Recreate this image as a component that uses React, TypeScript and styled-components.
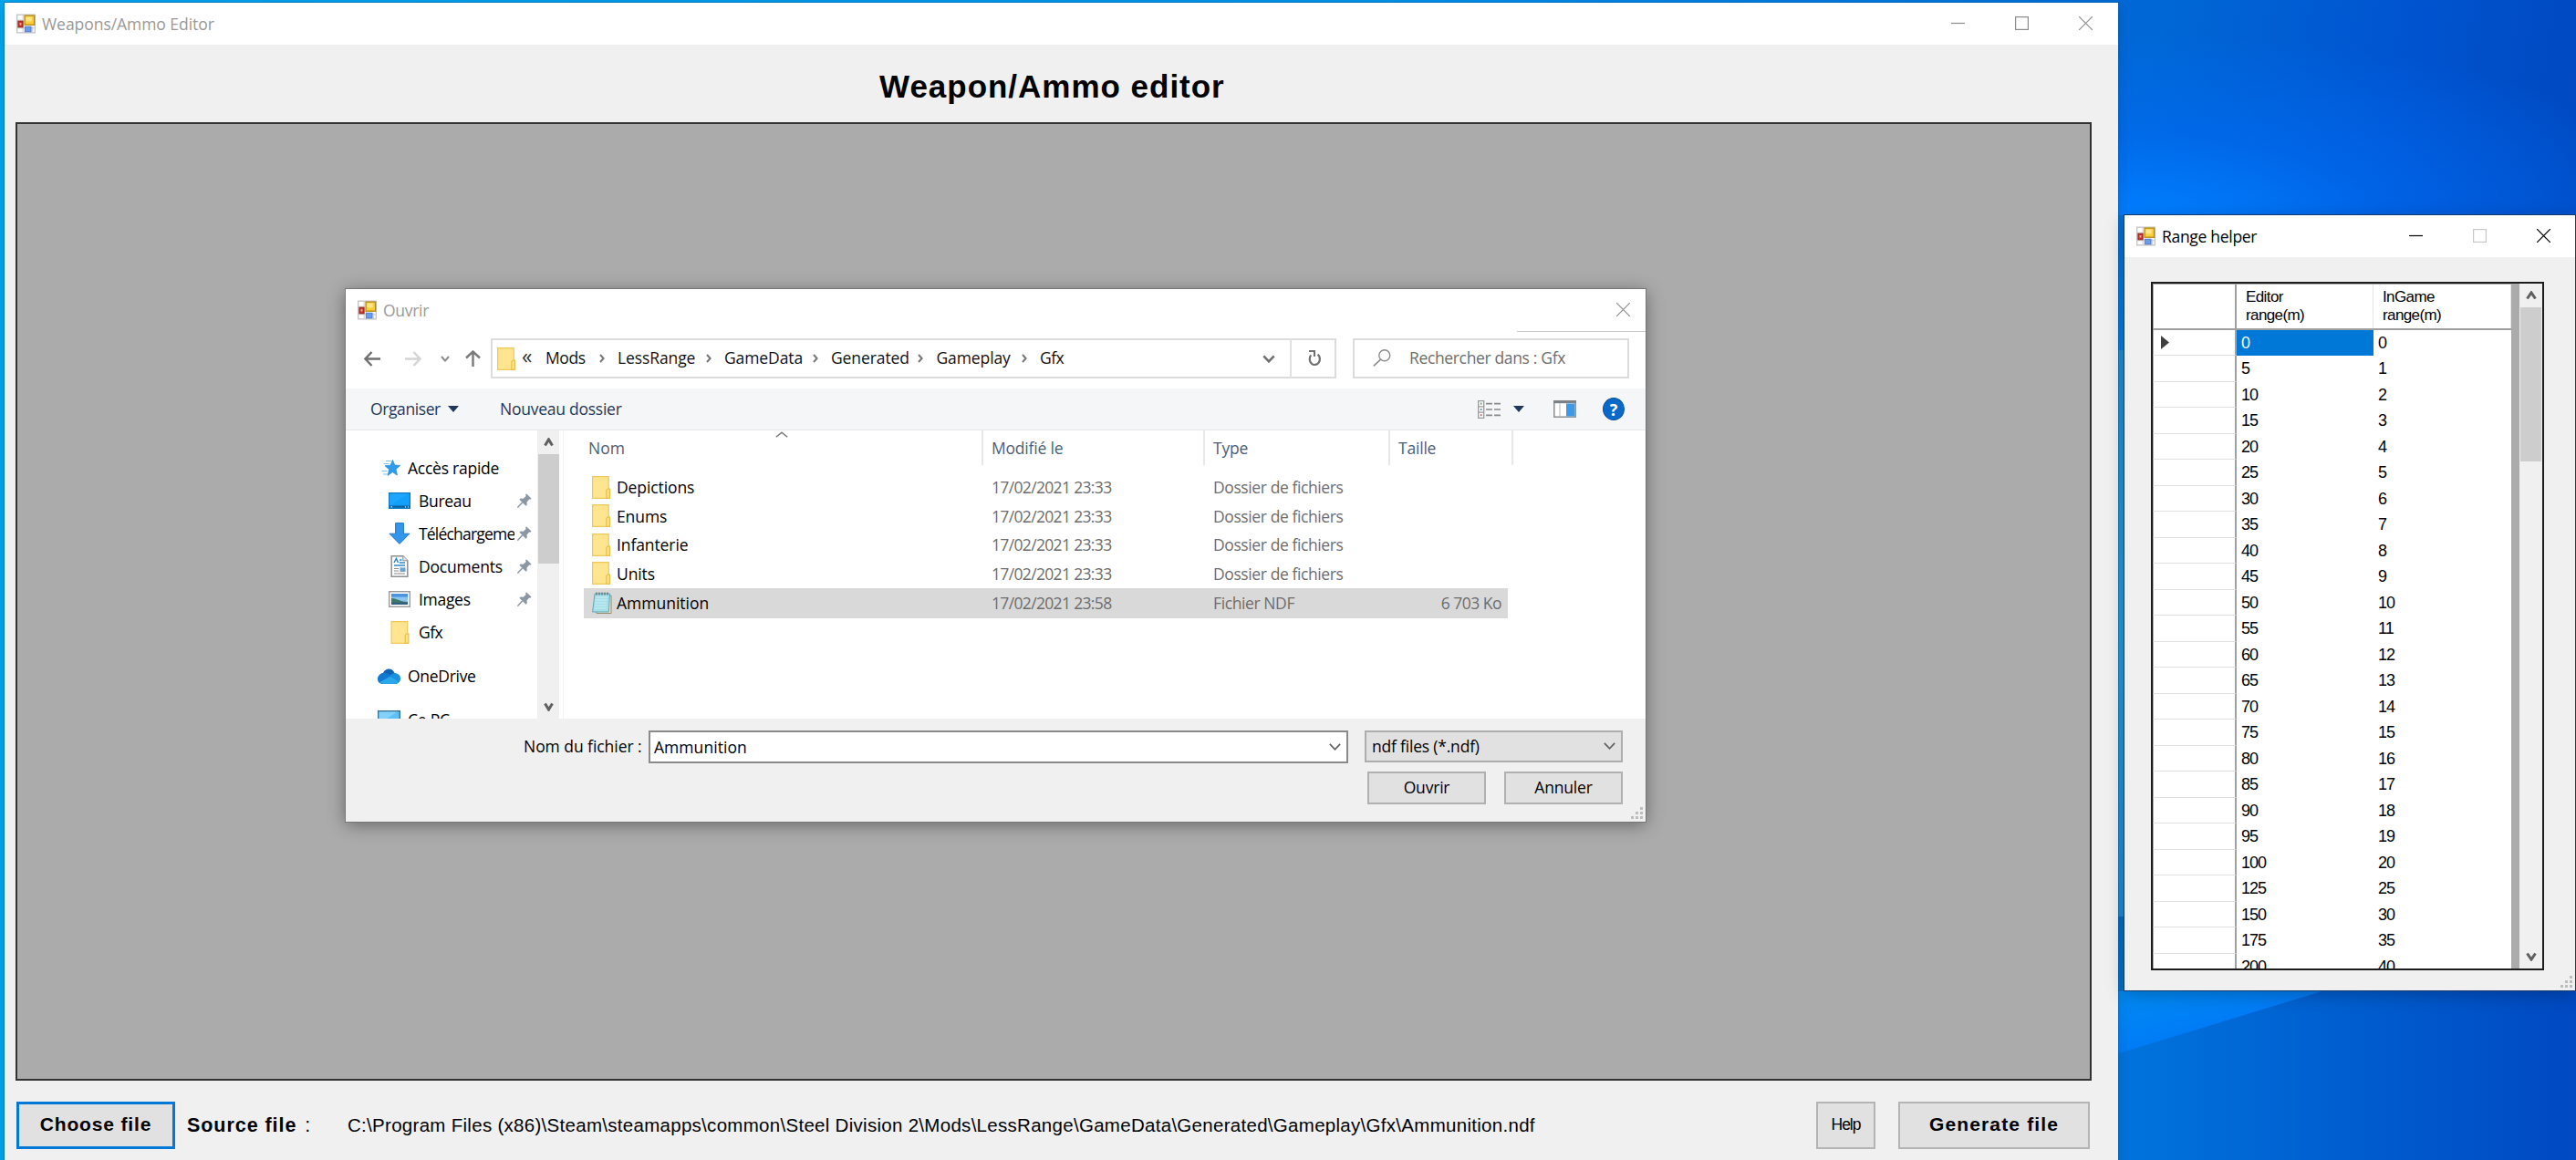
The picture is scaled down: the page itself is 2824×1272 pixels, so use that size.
import React from "react";
import styled, { createGlobalStyle, css } from "styled-components";

const SEGOE = `"Open Sans", "Noto Sans", sans-serif`;
const SANS = `"Liberation Sans", Arial, sans-serif`;

const GlobalStyle = createGlobalStyle`
  html, body { margin: 0; padding: 0; }
  body { width: 2824px; height: 1272px; overflow: hidden; }
  *, *::before, *::after { box-sizing: border-box; }
  svg { display: block; flex: none; }
`;

/* ---------- desktop ---------- */

const Desktop = styled.div`
  position: relative;
  width: 2824px;
  height: 1272px;
  overflow: hidden;
  background:
    linear-gradient(90deg, #00a6f0 0, #00a6f0 8px, transparent 8px) no-repeat,
    linear-gradient(90deg, #00a4ee 0, #0092ea 1500px, #006cd8 2322px) 0 0 / 2322px 4px no-repeat,
    linear-gradient(#0074e0, #0084ee) 2318px 236px / 12px 148px no-repeat,
    linear-gradient(#2094dc, #22a2e4 50%, #1f90de) 2318px 384px / 12px 621px no-repeat,
    linear-gradient(#0070cc, #0076d4) 2318px 1005px / 12px 82px no-repeat,
    linear-gradient(163deg, #008cf4 0, #007cf6 66px, transparent 67px) 2318px 1087px / 506px 185px no-repeat,
    radial-gradient(ellipse 620px 200px at 2335px 236px, rgba(0, 126, 255, 1), rgba(0, 108, 244, 0.6) 45%, rgba(0, 90, 225, 0)) 0 0 / 2824px 236px no-repeat,
    linear-gradient(100deg, #0068d6 2330px, #0054d0 2600px, #0048c0 2824px) 0 0 / 2824px 236px no-repeat,
    linear-gradient(90deg, #0074dc 2322px, #005fd0 2560px, #0049c2 2824px);
`;

const WindowFrame = styled.section<{ $x: number; $y: number; $w: number; $h: number; $edge: string; $shadow: string }>`
  position: absolute;
  left: ${(p) => p.$x}px;
  top: ${(p) => p.$y}px;
  width: ${(p) => p.$w}px;
  height: ${(p) => p.$h}px;
  display: flex;
  flex-direction: column;
  background: #f0f0f0;
  box-shadow: 0 0 0 1px ${(p) => p.$edge}, ${(p) => p.$shadow};
`;

const TitleBar = styled.header`
  display: flex;
  align-items: center;
  height: 46px;
  flex: none;
  padding: 0 0 0 13px;
  gap: 7px;
  background: #fff;
`;

const TitleText = styled.span<{ $inactive?: boolean; $ls?: number }>`
  flex: 1;
  font: 17.5px/24px ${SEGOE};
  letter-spacing: ${(p) => p.$ls ?? 0}px;
  color: ${(p) => (p.$inactive ? "#999" : "#000")};
  white-space: pre;
`;

const Caption = styled.div<{ $right: number }>`
  display: flex;
  gap: 55px;
  padding: 0 ${(p) => p.$right}px 1px 0;
`;

/* ---------- main window ---------- */

const Heading = styled.h1`
  margin: 0;
  height: 85px;
  padding: 23px 0 0 959px;
  font: bold 35px/46px ${SANS};
  letter-spacing: 0.98px;
  color: #000;
  white-space: pre;
`;

const Workspace = styled.div`
  height: 1051px;
  margin: 0 29px 0 12px;
  border: 2px solid #333;
  background: #ababab;
  flex: none;
`;

const BottomBar = styled.footer`
  display: flex;
  align-items: center;
  height: 52px;
  margin: 23px 31px 0 13px;
  flex: none;
`;

const FormButton = styled.button<{ $w: number; $bold?: boolean; $focus?: boolean; $ls?: number }>`
  width: ${(p) => p.$w}px;
  height: 52px;
  padding: 0 0 2px;
  border: ${(p) => (p.$focus ? "3px solid #0078d7" : "2px solid #b4b4b4")};
  background: #e1e1e1;
  color: #000;
  font: ${(p) => (p.$bold ? "bold 21px" : "17.5px")} / 24px ${SANS};
  letter-spacing: ${(p) => p.$ls ?? 0}px;
  white-space: pre;
`;

const SourceLabel = styled.span`
  width: 177px;
  padding-left: 13px;
  font: bold 21.5px/26px ${SANS};
  letter-spacing: 0.95px;
  white-space: pre;
`;

const SourceColon = styled.span`
  margin-left: 2px;
  font-weight: normal;
`;

const SourcePath = styled.span`
  flex: 1;
  padding-bottom: 1px;
  font: 20.5px/26px ${SANS};
  letter-spacing: 0.29px;
  color: #000;
  white-space: pre;
`;

const Spacer = styled.div<{ $w: number }>`
  width: ${(p) => p.$w}px;
  flex: none;
`;

/* ---------- file dialog ---------- */

const NavBar = styled.div`
  position: relative;
  display: flex;
  align-items: flex-start;
  height: 63px;
  padding: 8px 18px 0 20px;
  background: #fff;
  flex: none;
`;

const CaptionEdge = styled.i`
  position: absolute;
  right: 0;
  top: 0;
  width: 141px;
  height: 1px;
  background: #ccc;
`;

const NavIcons = styled.div`
  display: flex;
  align-items: center;
  height: 44px;
  width: 139px;
`;

const AddressBox = styled.div`
  display: flex;
  align-items: center;
  height: 44px;
  width: 927px;
  border: 2px solid #dcdcdc;
  padding-left: 5px;
  flex: none;
`;

const Crumb = styled.span<{ $w: number; $ls?: number }>`
  width: ${(p) => p.$w}px;
  flex: none;
  padding-bottom: 2px;
  font: 17.5px/24px ${SEGOE};
  letter-spacing: ${(p) => p.$ls ?? 0}px;
  color: #111;
  white-space: pre;
`;

const Overflow = styled.span`
  width: 26px;
  flex: none;
  padding-bottom: 6px;
  font: 23px/24px ${SEGOE};
  color: #333;
`;

const CrumbChevron = styled.span<{ $w: number }>`
  width: ${(p) => p.$w}px;
  flex: none;
  display: flex;
  align-items: center;
`;

const RefreshBox = styled.div`
  display: flex;
  align-items: center;
  justify-content: center;
  width: 49px;
  height: 42px;
  padding-left: 3px;
  border-left: 2px solid #e2e2e2;
`;

const DropArrow = styled.div`
  flex: 1;
  display: flex;
  justify-content: flex-end;
  padding-right: 16px;
`;

const SearchBox = styled.div`
  display: flex;
  align-items: center;
  gap: 20px;
  width: 303px;
  height: 44px;
  margin-left: 18px;
  padding: 0 0 2px 20px;
  border: 2px solid #dcdcdc;
  font: 17.5px/24px ${SEGOE};
  letter-spacing: -0.35px;
  color: #6d6d6d;
  white-space: pre;
  flex: none;
`;

const ToolBar = styled.div`
  display: flex;
  align-items: center;
  height: 46px;
  padding: 0 23px 0 27px;
  background: #f5f6f8;
  border-bottom: 1px solid #e8e8e8;
  flex: none;
`;

const ToolLabel = styled.span<{ $w: number; $ls?: number }>`
  width: ${(p) => p.$w}px;
  padding-bottom: 2px;
  font: 17.5px/24px ${SEGOE};
  letter-spacing: ${(p) => p.$ls ?? 0}px;
  color: #1e395b;
  white-space: pre;
`;

const ToolIcons = styled.div`
  flex: 1;
  display: flex;
  align-items: center;
  justify-content: flex-end;
`;

const DialogBody = styled.div`
  display: flex;
  height: 316px;
  background: #fff;
  overflow: hidden;
  flex: none;
`;

const Tree = styled.nav`
  width: 210px;
  height: 316px;
  padding-top: 23px;
  overflow: hidden;
`;

const TreeRow = styled.div<{ $child?: boolean; $gap?: number }>`
  display: flex;
  align-items: center;
  height: 36px;
  margin-top: ${(p) => p.$gap ?? 0}px;
  padding-left: ${(p) => (p.$child ? 47 : 35)}px;
`;

const TreeIcon = styled.span`
  width: 33px;
  flex: none;
  display: flex;
`;

const TreeLabel = styled.span<{ $child?: boolean; $ls?: number }>`
  width: ${(p) => (p.$child ? 105 : 140)}px;
  overflow: hidden;
  font: 17.5px/26px ${SEGOE};
  letter-spacing: ${(p) => p.$ls ?? 0}px;
  color: #000;
  white-space: pre;
`;

const PinSlot = styled.span`
  padding-left: 3px;
`;

const ScrollTrack = styled.div<{ $w: number }>`
  display: flex;
  flex-direction: column;
  align-items: center;
  width: ${(p) => p.$w}px;
  flex: none;
  background: #f0f0f0;
`;

const ScrollArrow = styled.div`
  display: flex;
  align-items: center;
  justify-content: center;
  height: 26px;
  flex: none;
`;

const ScrollThumb = styled.div<{ $h: number }>`
  width: 23px;
  height: ${(p) => p.$h}px;
  background: #cdcdcd;
`;

const Grow = styled.div`
  flex: 1;
`;

const FileList = styled.div`
  flex: 1;
  margin-left: 4px;
  border-left: 1px solid #f2f2f2;
`;

const ListHeader = styled.div`
  position: relative;
  display: grid;
  grid-template-columns: 460px 243px 203px 135px;
  height: 38px;
`;

const SortMark = styled.span`
  position: absolute;
  left: 232px;
  top: 1px;
`;

const HeadCell = styled.div<{ $pl: number; $ls?: number }>`
  padding: 7px 0 0 ${(p) => p.$pl}px;
  border-right: 2px solid #e8e8e8;
  font: 17.5px/24px ${SEGOE};
  letter-spacing: ${(p) => p.$ls ?? 0}px;
  color: #4c607a;
  white-space: pre;
`;

const FileRows = styled.div`
  padding: 8.5px 0 0 22px;
`;

const FileRow = styled.div<{ $selected?: boolean }>`
  display: grid;
  grid-template-columns: 438px 243px 203px 129px;
  align-items: center;
  width: 1013px;
  height: ${(p) => (p.$selected ? 33 : 31.5)}px;
  ${(p) =>
    p.$selected &&
    css`
      background: #d9d9d9;
    `}
`;

const NameCell = styled.div<{ $ls?: number }>`
  display: flex;
  align-items: center;
  padding-left: 9px;
  font: 17.5px/24px ${SEGOE};
  letter-spacing: ${(p) => p.$ls ?? 0}px;
  color: #000;
`;

const FileIcon = styled.span`
  width: 27px;
  flex: none;
`;

const MetaCell = styled.div<{ $right?: boolean; $ls?: number }>`
  padding: ${(p) => (p.$right ? "0 7px 0 0" : "0 0 0 9px")};
  text-align: ${(p) => (p.$right ? "right" : "left")};
  font: 17.5px/24px ${SEGOE};
  letter-spacing: ${(p) => p.$ls ?? 0}px;
  color: #6d6d6d;
  white-space: pre;
`;

const DialogFooter = styled.div`
  flex: 1;
  padding: 13px 25px 0 195px;
  display: flex;
  flex-direction: column;
  gap: 9px;
`;

const FooterLine = styled.div`
  display: flex;
  align-items: flex-start;
`;

const FieldLabel = styled.span`
  width: 137px;
  flex: none;
  padding-top: 5px;
  font: 17.5px/24px ${SEGOE};
  letter-spacing: -0.05px;
  white-space: pre;
`;

const Combo = styled.div<{ $w: number; $grey?: boolean }>`
  display: flex;
  align-items: center;
  justify-content: space-between;
  flex: none;
  width: ${(p) => p.$w}px;
  height: ${(p) => (p.$grey ? 35 : 36)}px;
  padding: 0 6px 1px ${(p) => (p.$grey ? 6 : 4)}px;
  border: 2px solid ${(p) => (p.$grey ? "#adadad" : "#8a8a8a")};
  background: ${(p) => (p.$grey ? "#e1e1e1" : "#fff")};
  font: 17.5px/24px ${SEGOE};
  letter-spacing: ${(p) => (p.$grey ? -0.2 : 0.05)}px;
  white-space: pre;
`;

const DialogButtons = styled.div`
  display: flex;
  justify-content: flex-end;
  gap: 20px;
`;

const DialogButton = styled.button`
  width: 130px;
  height: 36px;
  padding: 0 0 2px;
  border: 2px solid #b0b0b0;
  background: #e1e1e1;
  color: #000;
  font: 17.5px/24px ${SEGOE};
  letter-spacing: -0.2px;
`;

const GripSlot = styled.span`
  position: absolute;
  right: 2px;
  bottom: 2px;
`;

/* ---------- range helper ---------- */

const RangeBody = styled.div`
  flex: 1;
  padding: 27px 34px 22px 29px;
`;

const GridFrame = styled.div`
  display: flex;
  height: 755px;
  border: 2px solid #1c1c1c;
  background: #ababab;
  overflow: hidden;
`;

const GridTable = styled.div`
  width: 393px;
  background: #fff;
  flex: none;
`;

const GridRow = styled.div`
  display: grid;
  grid-template-columns: 92px 150px 151px;
  height: 28.5px;
`;

const GridHead = styled(GridRow)`
  height: 50.5px;
  border-top: 1px solid #ababab;
  border-bottom: 2px solid #a0a0a0;
`;

const GridHeadCell = styled.div`
  padding: 4px 0 0 10px;
  font: 17px/20px ${SANS};
  letter-spacing: -0.6px;
  color: #000;
  white-space: pre-line;
  border-right: 1px solid #e5e5e5;
`;

const RowHeader = styled.div<{ $line?: boolean }>`
  display: flex;
  align-items: center;
  padding-left: 8px;
  border-left: 1px solid #ababab;
  border-right: 2px solid #a0a0a0;
  border-bottom: ${(p) => (p.$line ? "1px solid #e0e0e0" : "0")};
`;

const GridCell = styled.div<{ $selected?: boolean }>`
  padding: 2px 0 0 5px;
  font: 18px/24px ${SANS};
  letter-spacing: -1px;
  background: ${(p) => (p.$selected ? "#0078d7" : "#fff")};
  color: ${(p) => (p.$selected ? "#fff" : "#000")};
`;

const GridGutter = styled.div`
  width: 9px;
  flex: none;
`;

/* ---------- drawings ---------- */

const AppIcon = () => (
  <svg width="21" height="22" viewBox="0 0 22 22">
    <rect x="0.7" y="0.7" width="20.6" height="20.6" fill="#fff" stroke="#c4c4c4" strokeWidth="1.4" />
    <path d="M7.5 1v20M1 7h7M1 16h20M14 14v7M18.5 14v7" stroke="#c8c8c8" fill="none" />
    <rect x="9.5" y="1.7" width="11" height="10.6" fill="#fbcf3c" stroke="#b98a10" strokeWidth="1.4" />
    <rect x="11" y="3.2" width="6.5" height="5" fill="#fde58a" />
    <rect x="2" y="8" width="5.4" height="7" fill="#c8352b" stroke="#8e1d18" />
    <rect x="3.7" y="10" width="2" height="2.6" fill="#f2a59b" />
    <rect x="9.8" y="14.4" width="7" height="5.8" fill="#6b9bef" stroke="#4a78d0" />
  </svg>
);

const MinGlyph = ({ color }: { color: string }) => (
  <svg width="15" height="15" viewBox="0 0 15 15"><path d="M0 7.5h15" stroke={color} strokeWidth="1.2" /></svg>
);
const MaxGlyph = ({ color }: { color: string }) => (
  <svg width="15" height="15" viewBox="0 0 15 15"><rect x="0.6" y="0.6" width="13.8" height="13.8" fill="none" stroke={color} strokeWidth="1.2" /></svg>
);
const CloseGlyph = ({ color }: { color: string }) => (
  <svg width="15" height="15" viewBox="0 0 15 15"><path d="M0 0l15 15M15 0L0 15" stroke={color} strokeWidth="1.2" /></svg>
);

const Folder = ({ w = 20, h = 25 }: { w?: number; h?: number }) => (
  <svg width={w} height={h} viewBox="0 0 20 25">
    <path d="M0.6 0.6h17.6v23.8H0.6z" fill="#ffe58f" stroke="#efc955" strokeWidth="1.2" />
    <path d="M15.8 24.4v-9l1.6-1.4h2v10.4z" fill="#ffe08a" stroke="#e6bd45" strokeWidth="1.1" />
  </svg>
);

const NotepadIcon = () => (
  <svg width="22" height="25" viewBox="0 0 22 25">
    <path d="M5 4h16v19.500H5z" fill="#f0ead2" stroke="#968b68" />
    <path d="M3 2h16.500l-1 20H0.600z" fill="#a4dee8" stroke="#5fa9b8" />
    <path d="M4 6h13M3.500 9h13M3 12h13M3 15h13M2.500 18h13" stroke="#cdf0f5" />
    <path d="M5 0.500v3M8 0.500v3M11 0.500v3M14 0.500v3M17 0.500v3" stroke="#555" />
  </svg>
);

const Chevron = ({ dir, w, h, sw = 2, color = "#606060" }: { dir: "up" | "down" | "right"; w: number; h: number; sw?: number; color?: string }) => {
  const m = sw / 2;
  const d =
    dir === "up"
      ? `M${m} ${h - m}L${w / 2} ${m + 0.4}L${w - m} ${h - m}`
      : dir === "down"
      ? `M${m} ${m}L${w / 2} ${h - m - 0.4}L${w - m} ${m}`
      : `M${m} ${m}L${w - m - 0.4} ${h / 2}L${m} ${h - m}`;
  return (
    <svg width={w} height={h} viewBox={`0 0 ${w} ${h}`}><path d={d} fill="none" stroke={color} strokeWidth={sw} /></svg>
  );
};

const NavArrow = ({ color, flip }: { color: string; flip?: boolean }) => (
  <svg width="18" height="17" viewBox="0 0 18 17">
    <path transform={flip ? "translate(18 0) scale(-1 1)" : undefined} d="M8.5 1L1.5 8.5l7 7.5M1.5 8.5H18" fill="none" stroke={color} strokeWidth="2.4" />
  </svg>
);
const UpArrow = () => (
  <svg width="17" height="18" viewBox="0 0 17 18"><path d="M1 8.5L8.5 1.5 16 8.5M8.5 1.5V18" fill="none" stroke="#7a7a7a" strokeWidth="2.4" /></svg>
);
const Triangle = () => (
  <svg width="12" height="7" viewBox="0 0 12 7"><path d="M0 0h12L6 7z" fill="#1e395b" /></svg>
);
const RefreshIcon = () => (
  <svg width="15" height="20" viewBox="0 0 15 20">
    <path d="M10.600 5.600A5.600 6.300 0 1 1 3.200 6.400" fill="none" stroke="#707070" strokeWidth="2.2" />
    <path d="M1 2h6v6" fill="none" stroke="#707070" strokeWidth="2.1" />
  </svg>
);
const SearchIcon = () => (
  <svg width="20" height="19" viewBox="0 0 20 19">
    <circle cx="12.8" cy="6.8" r="6" fill="none" stroke="#8b8b8b" strokeWidth="1.4" />
    <path d="M8.6 11.2L0.8 18.4" stroke="#8b8b8b" strokeWidth="1.6" />
  </svg>
);
const ViewIcon = () => (
  <svg width="25" height="20" viewBox="0 0 25 20">
    <path d="M0.7 0.7h6v18.6h-6zM0.7 6.9h6M0.7 13.1h6" fill="#fff" stroke="#999" strokeWidth="1.3" />
    <path d="M3.7 2.6v2" stroke="#5a9e58" strokeWidth="1.6" /><path d="M3.7 9v2" stroke="#4a90d9" strokeWidth="1.6" /><path d="M3.7 15.2v2" stroke="#d05050" strokeWidth="1.6" />
    <path d="M9 3.6h7M18 3.6h7M9 10h7M18 10h7M9 16.4h7M18 16.4h7" stroke="#8a8a8a" strokeWidth="1.6" />
  </svg>
);
const PaneIcon = () => (
  <svg width="25" height="19" viewBox="0 0 25 19">
    <rect x="0.8" y="0.8" width="23.4" height="17.4" fill="#fff" stroke="#8a8f94" strokeWidth="1.5" />
    <path d="M0 1.7h25" stroke="#7c8186" strokeWidth="3" /><path d="M7 3v15" stroke="#b5b5b5" />
    <rect x="14" y="3.5" width="9.5" height="14" fill="#3f9ae5" />
  </svg>
);
const HelpMark = styled.span`
  display: flex;
  align-items: center;
  justify-content: center;
  width: 24px;
  height: 25px;
  border-radius: 50%;
  border: 1px solid #0a4f9c;
  background: #0869c9;
  color: #fff;
  font: bold 18px/22px ${SEGOE};
`;

const StarIcon = () => (
  <svg width="21" height="18" viewBox="0 0 21 18">
    <path d="M12.5 0.5l2.2 5.6 6 .3-4.7 4 1.4 6.7-5.1-3.5-5.2 3.8 1.5-6.6L4 6.7l6-.4z" fill="#2f9bec" stroke="#1c86d8" strokeWidth="0.7" />
    <path d="M5 1.5h6M2.5 4.5h6M0.5 12.5h6M2 16h5" stroke="#7cc3f2" strokeWidth="1.2" />
  </svg>
);
const DesktopIcon = () => (
  <svg width="24" height="18" viewBox="0 0 24 18">
    <rect x="0.6" y="0.6" width="22.8" height="16.8" fill="#12a0fb" stroke="#0b79c4" strokeWidth="1.2" />
    <path d="M1 15.6h22" stroke="#0a5fa0" strokeWidth="2.2" /><path d="M2.5 15.8h1.5M18 15.8h1M21 15.8h1" stroke="#cfeaff" strokeWidth="1.2" />
    <path d="M1.2 14.4V1.2h20z" fill="#3ab2ff" opacity="0.35" />
  </svg>
);
const DownloadIcon = () => (
  <svg width="24" height="24" viewBox="0 0 24 24"><path d="M7.6 0.6h8.8v11.6h6.6L12 23.4.9 12.2h6.7z" fill="#3396ea" stroke="#2377c4" strokeWidth="1" /></svg>
);
const DocIcon = () => (
  <svg width="24" height="24" viewBox="0 0 24 24">
    <path d="M3.2.8h12.6l5 5v17.4H3.2z" fill="#fff" stroke="#8f8f8f" strokeWidth="1.5" /><path d="M15.8 .8v5h5" fill="#e8e8e8" stroke="#8f8f8f" />
    <path d="M6 8l2.4-4.5L10.5 8M12 5h2.5M12 8h6M6 11h12" fill="none" stroke="#2a8bd4" strokeWidth="1.5" />
    <path d="M6 14.5h5M6 17h5M6 20h12" stroke="#888" strokeWidth="1.2" /><rect x="12.5" y="13.4" width="6" height="4.6" fill="#6aa5cf" />
  </svg>
);
const ImageIcon = () => (
  <svg width="24" height="18" viewBox="0 0 24 18">
    <rect x="0.7" y="0.7" width="22.6" height="16.6" fill="#fff" stroke="#9a9a9a" strokeWidth="1.4" />
    <rect x="3" y="3" width="18" height="12" fill="#8fc3f2" /><path d="M3 3h18v3.6H3z" fill="#4b93df" />
    <path d="M3 8c5-.5 8 3.5 18 4v3H3z" fill="#3c7a68" /><path d="M3 12.5h18V15H3z" fill="#355f80" />
  </svg>
);
const CloudIcon = () => (
  <svg width="25" height="17" viewBox="0 0 25 17">
    <path d="M5 12C1 11 1 5.5 6 5 8-.5 16-1.500 18.500 5L12 12z" fill="#0f62b4" />
    <path d="M18 5c4 0 7 2.400 7 6 0 3.500-2.500 6-6 6H6l-4-2L14 7z" fill="#1a8fe0" />
    <path d="M6 5c2.500-.6 5 .5 7 2l9 8.500c-1 1-2 1.500-3.500 1.500H5.500C2 17 0 14.500 0 11.500S2.500 5.500 6 5z" fill="#1278d0" />
    <path d="M2 15.300L14 8.500l9 6.300c-1 1.500-2.600 2.200-4.200 2.200H5.800C4.200 17 3 16.500 2 15.300z" fill="#28a8ea" />
  </svg>
);
const PcIcon = () => (
  <svg width="25" height="20" viewBox="0 0 25 20">
    <rect x="0.7" y="0.7" width="23.6" height="15" fill="#5cc0f8" stroke="#3b7291" strokeWidth="1.4" /><path d="M1.400 15V1.400h20z" fill="#9bdcff" opacity="0.6" />
    <path d="M7 19h11" stroke="#6b7d88" strokeWidth="1.600" />
  </svg>
);
const PinIcon = () => (
  <svg width="16" height="16" viewBox="0 0 16 16">
    <path d="M10 .3l5.700 5.400-1.600 1-.9-.3-2.700 3 .3 3-1.300 1.300L2.400 6.700l1.400-1.300 2.900.3L9.600 3 9.200 1.600z" fill="#8b98a3" />
    <path d="M5.600 10L.4 15.600" stroke="#8b98a3" strokeWidth="1.500" />
  </svg>
);
const Grip = () => (
  <svg width="14" height="14" viewBox="0 0 14 14">
    <g fill="#bdbdbd">
      <rect x="10" y="0" width="3" height="3" /><rect x="5" y="5" width="3" height="3" /><rect x="10" y="5" width="3" height="3" />
      <rect x="0" y="10" width="3" height="3" /><rect x="5" y="10" width="3" height="3" /><rect x="10" y="10" width="3" height="3" />
    </g>
  </svg>
);

/* ---------- data ---------- */

const crumbs: [string, number, number, number][] = [
  ["Mods", 59, 20, -0.4],
  ["LessRange", 96.5, 20.5, -0.1],
  ["GameData", 96.5, 20.5, -0.1],
  ["Generated", 95, 20.5, -0.1],
  ["Gameplay", 93, 20.5, -0.1],
];

const treeChildren: [string, React.ReactNode, boolean, number][] = [
  ["Bureau", <DesktopIcon />, true, -0.3],
  ["Téléchargements", <DownloadIcon />, true, -0.8],
  ["Documents", <DocIcon />, true, -0.2],
  ["Images", <ImageIcon />, true, -0.3],
  ["Gfx", <Folder w={25} h={25} />, false, -0.5],
];

const files = [
  { name: "Depictions", date: "17/02/2021 23:33", type: "Dossier de fichiers", size: "" },
  { name: "Enums", date: "17/02/2021 23:33", type: "Dossier de fichiers", size: "" },
  { name: "Infanterie", date: "17/02/2021 23:33", type: "Dossier de fichiers", size: "" },
  { name: "Units", date: "17/02/2021 23:33", type: "Dossier de fichiers", size: "" },
  { name: "Ammunition", date: "17/02/2021 23:58", type: "Fichier NDF", size: "6 703 Ko", selected: true },
];

const ranges: number[] = [
  ...Array.from({ length: 21 }, (_, i) => i * 5),
  125, 150, 175, 200,
];

/* ---------- windows ---------- */

const MainWindow = () => (
  <WindowFrame $x={5} $y={3} $w={2317} $h={1290} $edge="rgba(20,90,150,0.45)" $shadow="0 3px 16px rgba(0,0,0,0.13)">
    <TitleBar>
      <AppIcon />
      <TitleText $inactive $ls={-0.05}>Weapons/Ammo Editor</TitleText>
      <Caption $right={28}>
        <MinGlyph color="#8c8c8c" />
        <MaxGlyph color="#8c8c8c" />
        <CloseGlyph color="#8c8c8c" />
      </Caption>
    </TitleBar>
    <Heading>Weapon/Ammo editor</Heading>
    <Workspace />
    <BottomBar>
      <FormButton $w={174} $bold $focus $ls={0.85}>Choose file</FormButton>
      <SourceLabel>Source file <SourceColon>:</SourceColon></SourceLabel>
      <Spacer $w={12} />
      <SourcePath>{"C:\\Program Files (x86)\\Steam\\steamapps\\common\\Steel Division 2\\Mods\\LessRange\\GameData\\Generated\\Gameplay\\Gfx\\Ammunition.ndf"}</SourcePath>
      <FormButton $w={65} $ls={-1}>Help</FormButton>
      <Spacer $w={25} />
      <FormButton $w={210} $bold $ls={1.15}>Generate file</FormButton>
    </BottomBar>
  </WindowFrame>
);

const OpenDialog = () => (
  <WindowFrame $x={379} $y={317} $w={1425} $h={584} $edge="#777" $shadow="0 3px 18px rgba(0,0,0,0.42)">
    <TitleBar>
      <AppIcon />
      <TitleText $inactive $ls={-0.3}>Ouvrir</TitleText>
      <Caption $right={17}><CloseGlyph color="#8c8c8c" /></Caption>
    </TitleBar>
    <NavBar>
      <CaptionEdge />
      <NavIcons>
        <NavArrow color="#707070" />
        <Spacer $w={27} />
        <NavArrow color="#d5d5d5" flip />
        <Spacer $w={21} />
        <Chevron dir="down" w={10} h={7} color="#8a8a8a" />
        <Spacer $w={17} />
        <UpArrow />
      </NavIcons>
      <AddressBox>
        <Folder />
        <Spacer $w={7} />
        <Overflow>«</Overflow>
        {crumbs.map(([label, w, gap, ls]) => (
          <React.Fragment key={label}>
            <Crumb $w={w} $ls={ls}>{label}</Crumb>
            <CrumbChevron $w={gap}><Chevron dir="right" w={6} h={10} color="#777" /></CrumbChevron>
          </React.Fragment>
        ))}
        <Crumb $w={40} $ls={-0.5}>Gfx</Crumb>
        <DropArrow><Chevron dir="down" w={14} h={9} sw={2.6} color="#707070" /></DropArrow>
        <RefreshBox><RefreshIcon /></RefreshBox>
      </AddressBox>
      <SearchBox><SearchIcon />Rechercher dans : Gfx</SearchBox>
    </NavBar>
    <ToolBar>
      <ToolLabel $w={85} $ls={-0.4}>Organiser</ToolLabel>
      <Triangle />
      <Spacer $w={45} />
      <ToolLabel $w={160} $ls={-0.25}>Nouveau dossier</ToolLabel>
      <ToolIcons>
        <ViewIcon />
        <Spacer $w={14} />
        <Triangle />
        <Spacer $w={32} />
        <PaneIcon />
        <Spacer $w={29} />
        <HelpMark>?</HelpMark>
      </ToolIcons>
    </ToolBar>
    <DialogBody>
      <Tree>
        <TreeRow>
          <Spacer $w={4} />
          <StarIcon />
          <Spacer $w={8} />
          <TreeLabel $ls={-0.25}>Accès rapide</TreeLabel>
        </TreeRow>
        {treeChildren.map(([label, icon, pinned, ls]) => (
          <TreeRow key={label} $child>
            <TreeIcon>{icon}</TreeIcon>
            <TreeLabel $child $ls={ls}>{label}</TreeLabel>
            {pinned && <PinSlot><PinIcon /></PinSlot>}
          </TreeRow>
        ))}
        <TreeRow $gap={12}>
          <TreeIcon><CloudIcon /></TreeIcon>
          <TreeLabel $ls={-0.3}>OneDrive</TreeLabel>
        </TreeRow>
        <TreeRow $gap={12}>
          <TreeIcon><PcIcon /></TreeIcon>
          <TreeLabel $ls={-0.2}>Ce PC</TreeLabel>
        </TreeRow>
      </Tree>
      <ScrollTrack $w={24}>
        <ScrollArrow><Chevron dir="up" w={11} h={10} sw={3} /></ScrollArrow>
        <ScrollThumb $h={120} />
        <Grow />
        <ScrollArrow><Chevron dir="down" w={11} h={10} sw={3} /></ScrollArrow>
      </ScrollTrack>
      <FileList>
        <ListHeader>
          <SortMark><Chevron dir="up" w={14} h={7} sw={1.5} color="#777" /></SortMark>
          <HeadCell $pl={27}>Nom</HeadCell>
          <HeadCell $pl={9} $ls={-0.2}>Modifié le</HeadCell>
          <HeadCell $pl={9} $ls={-0.2}>Type</HeadCell>
          <HeadCell $pl={9} $ls={-0.2}>Taille</HeadCell>
        </ListHeader>
        <FileRows>
          {files.map((f) => (
            <FileRow key={f.name} $selected={f.selected}>
              <NameCell $ls={f.selected ? 0 : -0.1}><FileIcon>{f.selected ? <NotepadIcon /> : <Folder />}</FileIcon>{f.name}</NameCell>
              <MetaCell $ls={-0.66}>{f.date}</MetaCell>
              <MetaCell $ls={-0.4}>{f.type}</MetaCell>
              <MetaCell $right $ls={-0.5}>{f.size}</MetaCell>
            </FileRow>
          ))}
        </FileRows>
      </FileList>
    </DialogBody>
    <DialogFooter>
      <FooterLine>
        <FieldLabel>Nom du fichier :</FieldLabel>
        <Combo $w={767}>Ammunition<Chevron dir="down" w={13} h={8} sw={1.7} /></Combo>
        <Spacer $w={18} />
        <Combo $w={283} $grey>ndf files (*.ndf)<Chevron dir="down" w={13} h={8} sw={1.7} /></Combo>
      </FooterLine>
      <DialogButtons>
        <DialogButton>Ouvrir</DialogButton>
        <DialogButton>Annuler</DialogButton>
      </DialogButtons>
    </DialogFooter>
    <GripSlot><Grip /></GripSlot>
  </WindowFrame>
);

const RangeHelper = () => (
  <WindowFrame $x={2329} $y={236} $w={494} $h={850} $edge="#123a6e" $shadow="0 5px 18px rgba(0,0,0,0.25)">
    <TitleBar>
      <AppIcon />
      <TitleText $ls={-0.3}>Range helper</TitleText>
      <Caption $right={27}>
        <MinGlyph color="#000" />
        <MaxGlyph color="#c8c8c8" />
        <CloseGlyph color="#000" />
      </Caption>
    </TitleBar>
    <RangeBody>
      <GridFrame>
        <GridTable>
          <GridHead>
            <RowHeader />
            <GridHeadCell>{"Editor\nrange(m)"}</GridHeadCell>
            <GridHeadCell>{"InGame\nrange(m)"}</GridHeadCell>
          </GridHead>
          {ranges.map((r, i) => (
            <GridRow key={r}>
              <RowHeader $line>
                {i === 0 && <svg width="9" height="15" viewBox="0 0 9 15"><path d="M0 0l9 7.500L0 15z" fill="#404040" /></svg>}
              </RowHeader>
              <GridCell $selected={i === 0}>{r}</GridCell>
              <GridCell>{r / 5}</GridCell>
            </GridRow>
          ))}
        </GridTable>
        <GridGutter />
        <ScrollTrack $w={25}>
          <ScrollArrow><Chevron dir="up" w={12} h={10} sw={3} /></ScrollArrow>
          <ScrollThumb $h={169} />
          <Grow />
          <ScrollArrow><Chevron dir="down" w={12} h={10} sw={3} /></ScrollArrow>
        </ScrollTrack>
      </GridFrame>
    </RangeBody>
    <GripSlot><Grip /></GripSlot>
  </WindowFrame>
);

export default function App() {
  return (
    <>
      <GlobalStyle />
      <Desktop>
        <MainWindow />
        <OpenDialog />
        <RangeHelper />
      </Desktop>
    </>
  );
}
